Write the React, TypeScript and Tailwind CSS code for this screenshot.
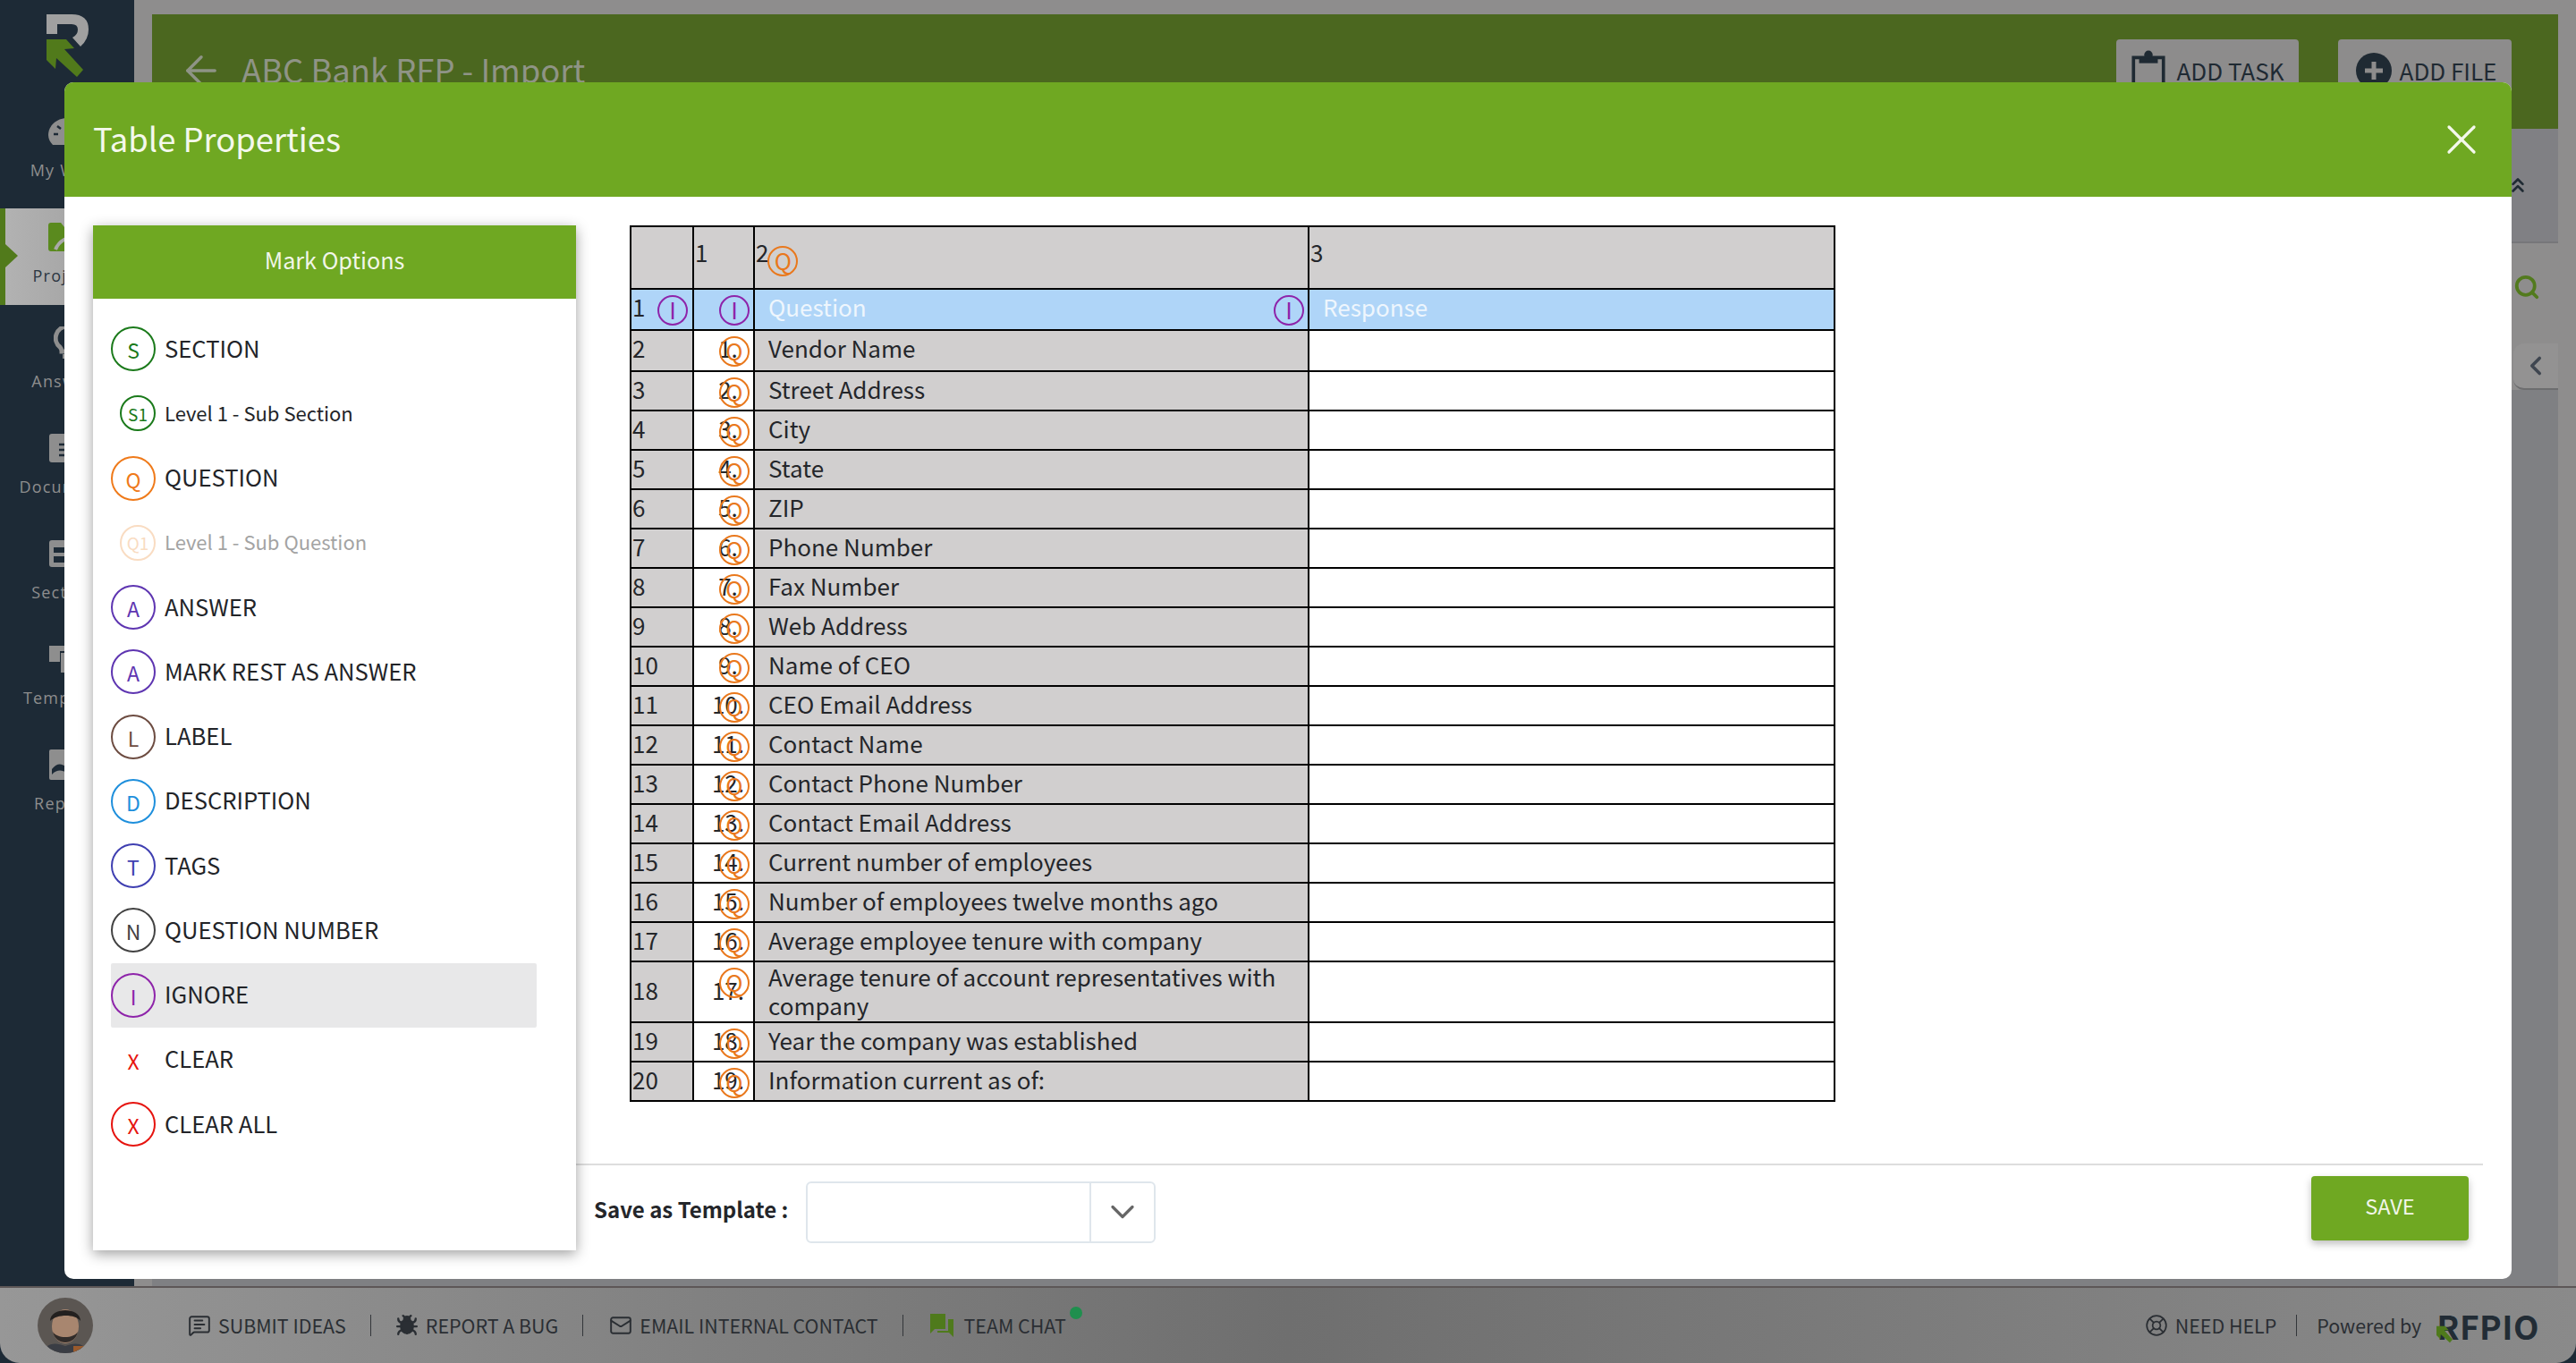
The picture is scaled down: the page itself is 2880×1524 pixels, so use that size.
import React from "react";
import { Bug, ChevronDown, ChevronLeft, ChevronsUp, LifeBuoy, Mail, MessageSquareText, Search, X, ArrowLeft } from "lucide-react";

const rows: [string, number][] = [
  ["Vendor Name", 46],
  ["Street Address", 44],
  ["City", 44],
  ["State", 44],
  ["ZIP", 44],
  ["Phone Number", 44],
  ["Fax Number", 44],
  ["Web Address", 44],
  ["Name of CEO", 44],
  ["CEO Email Address", 44],
  ["Contact Name", 44],
  ["Contact Phone Number", 44],
  ["Contact Email Address", 44],
  ["Current number of employees", 44],
  ["Number of employees twelve months ago", 44],
  ["Average employee tenure with company", 44],
  ["Average tenure of account representatives with company", 68],
  ["Year the company was established", 44],
  ["Information current as of:", 44],
];

function NavIcon({ name }: { name: string }) {
  const c = "#8e8e8e";
  if (name === "gauge")
    return (
      <svg width="42" height="30" viewBox="0 0 42 30">
        <path d="M21 0C9 0 0 9 0 19c0 4 2 8 5 11h32c3-3 5-7 5-11C42 9 33 0 21 0Z" fill={c} />
        <path d="M6 18h5M10 9l4 3M21 4v5M32 9l-4 3M24 22 30 11" stroke="#1d2a36" strokeWidth="2.5" fill="none" />
      </svg>
    );
  if (name === "folder")
    return (
      <svg width="42" height="32" viewBox="0 0 42 32">
        <path d="M0 3a3 3 0 0 1 3-3h11l4 5h21a3 3 0 0 1 3 3v21a3 3 0 0 1-3 3H3a3 3 0 0 1-3-3Z" fill="#5a8a1e" />
        <path d="M8 30C12 20 22 15 32 16" stroke="#a9a9a9" strokeWidth="4" fill="none" />
      </svg>
    );
  if (name === "bulb")
    return (
      <svg width="30" height="36" viewBox="0 0 30 36">
        <path d="M15 0a13 13 0 0 0-8 23c1 1 2 3 2 5h12c0-2 1-4 2-5A13 13 0 0 0 15 0Z" fill="none" stroke={c} strokeWidth="5" />
        <path d="M10 31h10v5H10Z" fill={c} />
      </svg>
    );
  if (name === "doc")
    return (
      <svg width="40" height="32" viewBox="0 0 40 32">
        <path d="M3 0h34a3 3 0 0 1 3 3v26a3 3 0 0 1-3 3H3a3 3 0 0 1-3-3V3a3 3 0 0 1 3-3Z" fill={c} />
        <path d="M11 12h24M11 18h24M11 24h24" stroke="#1d2a36" strokeWidth="2.5" />
      </svg>
    );
  if (name === "sections")
    return (
      <svg width="40" height="30" viewBox="0 0 40 30">
        <path d="M3 0h34a3 3 0 0 1 3 3v24a3 3 0 0 1-3 3H3a3 3 0 0 1-3-3V3a3 3 0 0 1 3-3Z" fill={c} />
        <path d="M5 8h30v6H5ZM5 18h30v7H5Z" fill="#1d2a36" />
      </svg>
    );
  if (name === "templates")
    return (
      <svg width="40" height="30" viewBox="0 0 40 30">
        <path d="M0 0h26v6H12v12H0Z" fill={c} />
        <path d="M13 8h27v22H13Z" fill={c} />
        <path d="M17 14h18v3H17Z" fill="#1d2a36" />
      </svg>
    );
  return (
    <svg width="40" height="34" viewBox="0 0 40 34">
      <path d="M2 0h36a2 2 0 0 1 2 2v30a2 2 0 0 1-2 2H2a2 2 0 0 1-2-2V2a2 2 0 0 1 2-2Z" fill={c} />
      <path d="M3 22c6-7 10-7 17-2s11 3 17-2v6c-6 5-11 5-17 2S9 22 3 28Z" fill="#1d2a36" />
    </svg>
  );
}

function NavItem({ icon, label, active }: { icon: string; label: string; active?: boolean }) {
  return (
    <div className={`relative h-[108px] flex flex-col items-center pt-[14px] ${active ? "bg-gradient-to-r from-[#b3b3b3] to-[#9c9c9c]" : ""}`}>
      {active && <div className="absolute left-0 top-0 h-full w-[6px] bg-[#517a1b]" />}
      {active && (
        <div className="absolute left-[6px] top-[40px] w-0 h-0 border-y-[13px] border-y-transparent border-l-[14px] border-l-[#517a1b]" />
      )}
      <div className="h-[36px] flex items-center justify-center">
        <NavIcon name={icon} />
      </div>
      <div className={`mt-[13px] h-[24px] leading-[24px] text-[18px] tracking-[1.2px] font-['Open_Sans',sans-serif] ${active ? "text-[#2a3642]" : "text-[#8e8e8e]"}`}>
        {label}
      </div>
    </div>
  );
}

function Mark({ letter, color, small, bare }: { letter: string; color: string; small?: boolean; bare?: boolean }) {
  const size = small ? "w-[40px] h-[40px] text-[19px]" : "w-[50px] h-[50px] text-[23px]";
  return (
    <div
      className={`${size} rounded-full flex items-center justify-center leading-none shrink-0 ${bare ? "" : "border-2"}`}
      style={{ borderColor: color, color }}
    >
      <span className={small ? "" : "mt-[3px]"}>{letter}</span>
    </div>
  );
}

function OptionRow({ letter, color, label, small, bare, faded, selected }: { letter: string; color: string; label: string; small?: boolean; bare?: boolean; faded?: boolean; selected?: boolean }) {
  return (
    <div className={`ml-[20px] w-[476px] h-[72.25px] flex items-center rounded-[2px] ${selected ? "bg-[#e8e8e9]" : ""}`}>
      <div className="w-[50px] flex justify-end">
        <Mark letter={letter} color={color} small={small} bare={bare} />
      </div>
      <div className={`ml-[10px] leading-[32px] mb-[3px] ${small ? "text-[22px]" : "text-[25.6px]"} ${faded ? "text-[#a3a3a3]" : "text-[#222428]"}`}>{label}</div>
    </div>
  );
}

function CellMark({ letter, kind, right }: { letter: string; kind: "q" | "i"; right: number }) {
  const color = kind === "q" ? "text-[#e9781c] border-[#e9781c]" : "text-[#8e24aa] border-[#8e24aa]";
  return (
    <span
      className={`absolute top-[6px] w-[34px] h-[34px] rounded-full border-2 flex items-center justify-center text-[26px] leading-none pb-[2px] ${color}`}
      style={{ right }}
    >
      {letter}
    </span>
  );
}

function FooterLink({ icon, label }: { icon: React.ReactNode; label: string }) {
  return (
    <div className="flex items-center gap-[8px]">
      {icon}
      <span>{label}</span>
    </div>
  );
}

const Sep = () => <div className="w-[1px] h-[24px] bg-[#33363a]" />;

export default function App() {
  return (
    <div className="relative w-[2880px] h-[1524px] overflow-hidden bg-[#1d2a36] font-['Noto_Sans_CJK_SC','Source_Sans_Pro',sans-serif]">
      {/* page behind the dialog */}
      <div className="flex h-[1438px]">
        <aside className="w-[150px] shrink-0 bg-[#1d2a36]">
          <div className="h-[115px] pt-[16px] pl-[52px]">
            <svg width="47" height="70" viewBox="52 16 47 70">
              <path d="M52 16H80Q99 16 99 33Q99 44 90 52L81 42Q87 39 87 33Q87 27 80 27H64V38H52Z" fill="#a0a0a0" />
              <path d="M52 44H74L83 54L72 55L93 78L86 86L63 65L62 77L52 67Z" fill="#517a1b" />
            </svg>
          </div>
          <div className="flex flex-col gap-[10px]">
            <NavItem icon="gauge" label="My Work" />
            <NavItem icon="folder" label="Projects" active />
            <NavItem icon="bulb" label="Answers" />
            <NavItem icon="doc" label="Documents" />
            <NavItem icon="sections" label="Sections" />
            <NavItem icon="templates" label="Templates" />
            <NavItem icon="image" label="Reports" />
          </div>
        </aside>
        <main className="flex-1 bg-[#8e8d8d] pt-[16px] pl-[20px] pr-[20px] flex flex-col">
          <div className="h-[128px] bg-[#4b671f] flex items-start justify-between pr-[52px]">
            <div className="flex items-center mt-[37px] ml-[29px] text-[#8f9486]">
              <ArrowLeft size={52} strokeWidth={1.6} />
              <span className="ml-[19px] mb-[4px] text-[36.4px] leading-[48px]">ABC Bank RFP - Import</span>
            </div>
            <div className="flex gap-[44px] mt-[28px]">
              <div className="w-[204px] h-[70px] rounded-[4px] bg-[#8d8c8c] flex items-center justify-center gap-[13px] text-[#1f2a33] text-[26px]">
                <svg width="38" height="46" viewBox="0 0 36 44" fill="none">
                  <path d="M2 8h32v34H2Z" stroke="#1f2a33" strokeWidth="3.5" />
                  <path d="M8 7h20v7H8Z" fill="#1f2a33" />
                  <circle cx="18" cy="5" r="4.5" fill="#1f2a33" />
                </svg>
                <span className="mb-[2px]">ADD TASK</span>
              </div>
              <div className="w-[194px] h-[70px] rounded-[4px] bg-[#8d8c8c] flex items-center justify-center gap-[9px] pl-[3px] text-[#1f2a33] text-[26px]">
                <svg width="40" height="40" viewBox="0 0 40 40">
                  <circle cx="20" cy="20" r="20" fill="#1f2a33" />
                  <path d="M20 10v20M10 20h20" stroke="#8d8c8c" strokeWidth="5" />
                </svg>
                <span className="mb-[2px]">ADD FILE</span>
              </div>
            </div>
          </div>
          <div className="h-[128px] bg-[#808084] border-b-2 border-[#77777a] flex justify-end pr-[32px] pt-[50px]">
            <ChevronsUp size={26} strokeWidth={2.5} className="text-[#1f2a33]" />
          </div>
          <div className="h-[112px] flex justify-end pr-[20px] pt-[34px]">
            <Search size={30} strokeWidth={3} className="text-[#527a1e]" />
          </div>
          <div className="flex justify-end">
            <div className="w-[50px] h-[52px] rounded-l-[12px] bg-[#939292] border-b-2 border-[#6d6d6f] flex items-center justify-center">
              <ChevronLeft size={34} strokeWidth={2.5} className="text-[#3f4650]" />
            </div>
          </div>
          <div className="flex-1 bg-[#7f8083]" />
        </main>
      </div>
      <footer className="h-[86px] flex items-center border-t-2 border-[#5d5757] bg-gradient-to-r from-[#979797] via-[#6f6f6f] to-[#8a8a8a] rounded-b-[22px] text-[#2a2e33] text-[21.4px] leading-[30px]">
        <div className="w-[150px] shrink-0 pl-[42px]">
          <svg width="62" height="62" viewBox="0 0 62 62">
            <clipPath id="av"><circle cx="31" cy="31" r="31" /></clipPath>
            <g clipPath="url(#av)">
              <rect width="62" height="62" fill="#5b5652" />
              <ellipse cx="31" cy="32" rx="15" ry="19" fill="#a8866f" />
              <path d="M14 26C14 10 48 10 48 26C42 18 22 18 14 26Z" fill="#23201f" />
              <path d="M17 38C20 54 42 54 45 38C40 46 22 46 17 38Z" fill="#312c2a" />
              <path d="M6 62C10 50 20 50 31 54C42 50 52 50 56 62Z" fill="#3a3d44" />
              <path d="M40 54h12v8H40Z" fill="#9a5a2c" />
            </g>
          </svg>
        </div>
        <div className="ml-[60px] flex items-center gap-[27px]">
          <FooterLink icon={<MessageSquareText size={26} strokeWidth={1.8} />} label="SUBMIT IDEAS" />
          <Sep />
          <FooterLink icon={<Bug size={26} strokeWidth={2.2} fill="#2a2e33" />} label="REPORT A BUG" />
          <Sep />
          <div className="ml-[2px]">
            <FooterLink icon={<Mail size={26} strokeWidth={1.8} />} label="EMAIL INTERNAL CONTACT" />
          </div>
          <Sep />
          <div className="relative ml-[3px] flex items-center gap-[12px]">
            <svg width="26" height="26" viewBox="0 0 26 26">
              <path d="M0 0h17v17H5l-5 5Z" fill="#4f7a1c" />
              <path d="M20 6h6v20l-5-5H8v-2h12Z" fill="#4f7a1c" />
            </svg>
            <span>TEAM CHAT</span>
            <span className="absolute -right-[18px] -top-[6px] w-[14px] h-[14px] rounded-full bg-[#1f8f4e]" />
          </div>
        </div>
        <div className="ml-auto mr-[41px] flex items-center gap-[22px]">
          <FooterLink icon={<LifeBuoy size={26} strokeWidth={1.6} />} label="NEED HELP" />
          <Sep />
          <span>Powered by</span>
          <span className="relative -ml-[5px] text-[37px] leading-[40px] font-bold tracking-[0.5px] text-[#222c35]">
            RFPIO
            <svg className="absolute left-0 top-[17px]" width="18" height="26" viewBox="52 44 41 42">
              <path d="M52 44H74L83 54L72 55L93 78L86 86L63 65L62 77L52 67Z" fill="#4f7a1c" />
            </svg>
          </span>
        </div>
      </footer>

      {/* dialog */}
      <div className="absolute left-[72px] top-[92px] w-[2736px] h-[1338px] bg-white rounded-[10px] overflow-hidden flex flex-col">
        <div className="h-[128px] shrink-0 bg-[#6fa822] flex items-center justify-between pl-[32px] pr-[28px]">
          <h1 className="mb-[5px] text-[36.4px] leading-[48px] text-[#f4f8ec] font-normal">Table Properties</h1>
          <X size={56} strokeWidth={1.4} className="text-[#f4f8ec]" />
        </div>
        <div className="flex-1 flex pt-[32px] px-[32px] pb-[32px] min-h-0">
          <section className="w-[540px] shrink-0 bg-white shadow-[0_4px_14px_rgba(0,0,0,0.38)] flex flex-col relative z-10">
            <div className="h-[82px] shrink-0 bg-[#6fa822] flex items-center justify-center text-[25.2px] leading-[34px] text-[#f1f6e8]"><span className="mb-[6px]">Mark Options</span></div>
            <div className="pt-[20px] flex flex-col">
              <OptionRow letter="S" color="#1b7a1b" label="SECTION" />
              <OptionRow letter="S1" color="#1b7a1b" label="Level 1 - Sub Section" small />
              <OptionRow letter="Q" color="#ef7a1a" label="QUESTION" />
              <OptionRow letter="Q1" color="#f9dcc2" label="Level 1 - Sub Question" small faded />
              <OptionRow letter="A" color="#5e35b1" label="ANSWER" />
              <OptionRow letter="A" color="#5e35b1" label="MARK REST AS ANSWER" />
              <OptionRow letter="L" color="#6d4c41" label="LABEL" />
              <OptionRow letter="D" color="#1e8fdc" label="DESCRIPTION" />
              <OptionRow letter="T" color="#3f3fb1" label="TAGS" />
              <OptionRow letter="N" color="#424242" label="QUESTION NUMBER" />
              <OptionRow letter="I" color="#8e24aa" label="IGNORE" selected />
              <OptionRow letter="X" color="#e6140f" label="CLEAR" bare />
              <OptionRow letter="X" color="#e6140f" label="CLEAR ALL" />
            </div>
          </section>
          <div className="flex-1 flex flex-col min-w-0">
            <div className="flex-1 pl-[60px]">
              <table className="w-[1346px] table-fixed border-collapse border-2 border-black text-[26px] leading-[32px] text-[#24262a]">
                <colgroup>
                  <col className="w-[70px]" />
                  <col className="w-[68px]" />
                  <col className="w-[620px]" />
                  <col className="w-[588px]" />
                </colgroup>
                <tbody>
                  <tr className="h-[70px] bg-[#d1cfcf]">
                    <td className="border-2 border-black"></td>
                    <td className="border-2 border-black align-top pt-[12px] pl-[1px]">1</td>
                    <td className="border-2 border-black align-top pt-[12px] pl-[1px]">
                      <span className="inline-flex items-start">
                        2
                        <span className="-ml-[1px] mt-[9px] w-[34px] h-[34px] rounded-full border-2 border-[#e9781c] text-[#e9781c] text-[26px] leading-none pb-[2px] flex items-center justify-center">Q</span>
                      </span>
                    </td>
                    <td className="border-2 border-black align-top pt-[12px] pl-[1px]">3</td>
                  </tr>
                  <tr className="h-[46px] bg-[#afd5f8]">
                    <td className="relative border-2 border-black pl-[1px] pb-[6px]">1<CellMark letter="I" kind="i" right={5} /></td>
                    <td className="relative border-2 border-black"><CellMark letter="I" kind="i" right={4} /></td>
                    <td className="relative border-2 border-black pl-[15px] pb-[6px] text-[#eef6fd]">Question<CellMark letter="I" kind="i" right={4} /></td>
                    <td className="border-2 border-black pl-[15px] pb-[6px] text-[#eef6fd]">Response</td>
                  </tr>
                  {rows.map(([text, h], i) => (
                    <tr key={i} style={{ height: h }}>
                      <td className={`bg-[#d1cfcf] border-2 border-black pl-[1px] ${i === 0 ? "pb-[6px]" : "pb-[4px]"}`}>{i + 2}</td>
                      <td className={`relative bg-white border-2 border-black text-center pl-[10px] ${i === 0 ? "pb-[6px]" : "pb-[4px]"}`}>
                        {i + 1}.
                        <CellMark letter="Q" kind="q" right={4} />
                      </td>
                      <td className={`bg-[#d1cfcf] border-2 border-black pl-[15px] pr-[10px] ${i === 0 ? "pb-[6px]" : h === 68 ? "pb-[2px]" : "pb-[4px]"}`}>{text}</td>
                      <td className="bg-white border-2 border-black"></td>
                    </tr>
                  ))}
                </tbody>
              </table>
            </div>
            <div className="h-[97px] shrink-0 border-t-2 border-[#dddddd] flex items-center justify-between pl-[20px] pr-[16px]">
              <div className="flex items-center mt-[9px]">
                <span className="w-[237px] whitespace-nowrap text-[24px] leading-[34px] font-bold text-[#24262a] mb-[6px]">Save as Template :</span>
                <div className="w-[391px] h-[69px] rounded-[6px] border-2 border-[#dfe6ec] flex">
                  <div className="flex-1" />
                  <div className="w-[72px] border-l-2 border-[#dfe6ec] flex items-center justify-center">
                    <ChevronDown size={44} strokeWidth={1.8} className="text-[#666666]" />
                  </div>
                </div>
              </div>
              <button className="w-[176px] h-[72px] rounded-[4px] bg-[#6fa822] text-[23.5px] text-[#f1f6e8] pb-[4px] shadow-[0_4px_8px_rgba(0,0,0,0.25)]">SAVE</button>
            </div>
          </div>
        </div>
      </div>
    </div>
  );
}
